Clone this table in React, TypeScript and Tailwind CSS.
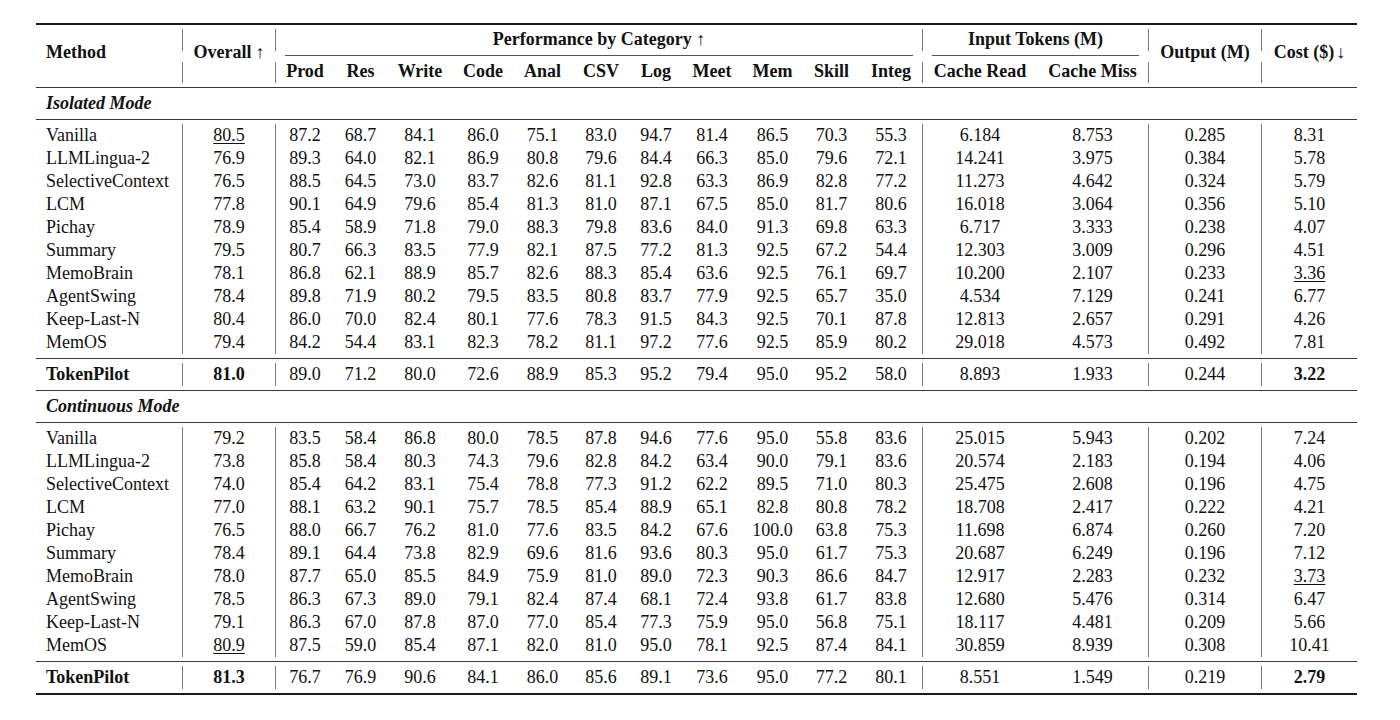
import React from "react";

type Cell = { v: string; u?: boolean; b?: boolean };
type RowData = { name: string; bold?: boolean; cells: (string | Cell)[] };

const GRID =
  "grid grid-cols-[146px_1px_92px_1px_58px_53px_66px_60px_59px_58px_52px_60px_61px_57px_62px_1px_114px_111px_1px_112px_1px_95px]";

const u = (v: string): Cell => ({ v, u: true });
const b = (v: string): Cell => ({ v, b: true });

const isolated: RowData[] = [
  { name: "Vanilla", cells: [u("80.5"), "87.2", "68.7", "84.1", "86.0", "75.1", "83.0", "94.7", "81.4", "86.5", "70.3", "55.3", "6.184", "8.753", "0.285", "8.31"] },
  { name: "LLMLingua-2", cells: ["76.9", "89.3", "64.0", "82.1", "86.9", "80.8", "79.6", "84.4", "66.3", "85.0", "79.6", "72.1", "14.241", "3.975", "0.384", "5.78"] },
  { name: "SelectiveContext", cells: ["76.5", "88.5", "64.5", "73.0", "83.7", "82.6", "81.1", "92.8", "63.3", "86.9", "82.8", "77.2", "11.273", "4.642", "0.324", "5.79"] },
  { name: "LCM", cells: ["77.8", "90.1", "64.9", "79.6", "85.4", "81.3", "81.0", "87.1", "67.5", "85.0", "81.7", "80.6", "16.018", "3.064", "0.356", "5.10"] },
  { name: "Pichay", cells: ["78.9", "85.4", "58.9", "71.8", "79.0", "88.3", "79.8", "83.6", "84.0", "91.3", "69.8", "63.3", "6.717", "3.333", "0.238", "4.07"] },
  { name: "Summary", cells: ["79.5", "80.7", "66.3", "83.5", "77.9", "82.1", "87.5", "77.2", "81.3", "92.5", "67.2", "54.4", "12.303", "3.009", "0.296", "4.51"] },
  { name: "MemoBrain", cells: ["78.1", "86.8", "62.1", "88.9", "85.7", "82.6", "88.3", "85.4", "63.6", "92.5", "76.1", "69.7", "10.200", "2.107", "0.233", u("3.36")] },
  { name: "AgentSwing", cells: ["78.4", "89.8", "71.9", "80.2", "79.5", "83.5", "80.8", "83.7", "77.9", "92.5", "65.7", "35.0", "4.534", "7.129", "0.241", "6.77"] },
  { name: "Keep-Last-N", cells: ["80.4", "86.0", "70.0", "82.4", "80.1", "77.6", "78.3", "91.5", "84.3", "92.5", "70.1", "87.8", "12.813", "2.657", "0.291", "4.26"] },
  { name: "MemOS", cells: ["79.4", "84.2", "54.4", "83.1", "82.3", "78.2", "81.1", "97.2", "77.6", "92.5", "85.9", "80.2", "29.018", "4.573", "0.492", "7.81"] },
];
const isolatedOurs: RowData = {
  name: "TokenPilot",
  bold: true,
  cells: [b("81.0"), "89.0", "71.2", "80.0", "72.6", "88.9", "85.3", "95.2", "79.4", "95.0", "95.2", "58.0", "8.893", "1.933", "0.244", b("3.22")],
};

const continuous: RowData[] = [
  { name: "Vanilla", cells: ["79.2", "83.5", "58.4", "86.8", "80.0", "78.5", "87.8", "94.6", "77.6", "95.0", "55.8", "83.6", "25.015", "5.943", "0.202", "7.24"] },
  { name: "LLMLingua-2", cells: ["73.8", "85.8", "58.4", "80.3", "74.3", "79.6", "82.8", "84.2", "63.4", "90.0", "79.1", "83.6", "20.574", "2.183", "0.194", "4.06"] },
  { name: "SelectiveContext", cells: ["74.0", "85.4", "64.2", "83.1", "75.4", "78.8", "77.3", "91.2", "62.2", "89.5", "71.0", "80.3", "25.475", "2.608", "0.196", "4.75"] },
  { name: "LCM", cells: ["77.0", "88.1", "63.2", "90.1", "75.7", "78.5", "85.4", "88.9", "65.1", "82.8", "80.8", "78.2", "18.708", "2.417", "0.222", "4.21"] },
  { name: "Pichay", cells: ["76.5", "88.0", "66.7", "76.2", "81.0", "77.6", "83.5", "84.2", "67.6", "100.0", "63.8", "75.3", "11.698", "6.874", "0.260", "7.20"] },
  { name: "Summary", cells: ["78.4", "89.1", "64.4", "73.8", "82.9", "69.6", "81.6", "93.6", "80.3", "95.0", "61.7", "75.3", "20.687", "6.249", "0.196", "7.12"] },
  { name: "MemoBrain", cells: ["78.0", "87.7", "65.0", "85.5", "84.9", "75.9", "81.0", "89.0", "72.3", "90.3", "86.6", "84.7", "12.917", "2.283", "0.232", u("3.73")] },
  { name: "AgentSwing", cells: ["78.5", "86.3", "67.3", "89.0", "79.1", "82.4", "87.4", "68.1", "72.4", "93.8", "61.7", "83.8", "12.680", "5.476", "0.314", "6.47"] },
  { name: "Keep-Last-N", cells: ["79.1", "86.3", "67.0", "87.8", "87.0", "77.0", "85.4", "77.3", "75.9", "95.0", "56.8", "75.1", "18.117", "4.481", "0.209", "5.66"] },
  { name: "MemOS", cells: [u("80.9"), "87.5", "59.0", "85.4", "87.1", "82.0", "81.0", "95.0", "78.1", "92.5", "87.4", "84.1", "30.859", "8.939", "0.308", "10.41"] },
];
const continuousOurs: RowData = {
  name: "TokenPilot",
  bold: true,
  cells: [b("81.3"), "76.7", "76.9", "90.6", "84.1", "86.0", "85.6", "89.1", "73.6", "95.0", "77.2", "80.1", "8.551", "1.549", "0.219", b("2.79")],
};

const VLine = () => <div className="bg-[#7a7a7a]" />;

function Num({ c }: { c: string | Cell }) {
  const cell: Cell = typeof c === "string" ? { v: c } : c;
  return (
    <div className={"text-center " + (cell.b ? "font-bold" : "")}>
      <span className={cell.u ? "underline underline-offset-[2px] decoration-1" : ""}>{cell.v}</span>
    </div>
  );
}

function Row({ r }: { r: RowData }) {
  const c = r.cells;
  return (
    <div className={GRID + " leading-[23px] h-[23px]"}>
      <div className={"pl-[10px] whitespace-nowrap " + (r.bold ? "font-bold" : "")}>{r.name}</div>
      <VLine />
      <Num c={c[0]} />
      <VLine />
      {c.slice(1, 12).map((x, i) => (
        <Num key={i} c={x} />
      ))}
      <VLine />
      <Num c={c[12]} />
      <Num c={c[13]} />
      <VLine />
      <Num c={c[14]} />
      <VLine />
      <Num c={c[15]} />
    </div>
  );
}

const MidRule = () => <div className="h-px bg-[#3a3a3a]" />;

function Section({ label, rows, ours }: { label: string; rows: RowData[]; ours: RowData }) {
  return (
    <>
      <div className="h-[31px] pt-[4px] pl-[10px] leading-[23px] font-bold italic">{label}</div>
      <MidRule />
      <div className="pt-[4px] pb-[4px]">
        {rows.map((r, i) => (
          <Row key={i} r={r} />
        ))}
      </div>
      <MidRule />
      <div className="pt-[4px] pb-[4px]">
        <Row r={ours} />
      </div>
    </>
  );
}

const subCats = ["Prod", "Res", "Write", "Code", "Anal", "CSV", "Log", "Meet", "Mem", "Skill", "Integ"];

function Header() {
  return (
    <div className={GRID + " grid-rows-[31px_31px] leading-[23px] font-bold"}>
      <div className="col-start-1 row-start-1 row-span-2 flex items-center pl-[10px] pb-[8px]">Method</div>
      <div className="col-start-2 row-start-1 bg-[#7a7a7a] mt-[4px] mb-[5px]" />
      <div className="col-start-2 row-start-2 bg-[#7a7a7a] mt-[6px] mb-[4px]" />
      <div className="col-start-3 row-start-1 row-span-2 flex items-center justify-center pb-[8px] whitespace-nowrap">
        Overall <span className="font-normal ml-[4px]">↑</span>
      </div>
      <div className="col-start-4 row-start-1 bg-[#7a7a7a] mt-[4px] mb-[5px]" />
      <div className="col-start-4 row-start-2 bg-[#7a7a7a] mt-[6px] mb-[4px]" />
      <div className="col-start-5 col-span-11 row-start-1 flex flex-col">
        <div className="pt-[3px] text-center whitespace-nowrap">
          Performance by Category <span className="font-normal">↑</span>
        </div>
        <div className="mt-auto mx-[9px] h-px bg-[#555]" />
      </div>
      {subCats.map((s, i) => (
        <div key={s} className="row-start-2 flex items-center justify-center" style={{ gridColumnStart: 5 + i }}>
          {s}
        </div>
      ))}
      <div className="col-start-16 row-start-1 bg-[#7a7a7a] mt-[4px] mb-[5px]" />
      <div className="col-start-16 row-start-2 bg-[#7a7a7a] mt-[6px] mb-[4px]" />
      <div className="col-start-17 col-span-2 row-start-1 flex flex-col">
        <div className="pt-[3px] text-center whitespace-nowrap">Input Tokens (M)</div>
        <div className="mt-auto mx-[9px] h-px bg-[#555]" />
      </div>
      <div className="col-start-17 row-start-2 flex items-center justify-center whitespace-nowrap">Cache Read</div>
      <div className="col-start-18 row-start-2 flex items-center justify-center whitespace-nowrap">Cache Miss</div>
      <div className="col-start-19 row-start-1 bg-[#7a7a7a] mt-[4px] mb-[5px]" />
      <div className="col-start-19 row-start-2 bg-[#7a7a7a] mt-[6px] mb-[4px]" />
      <div className="col-start-20 row-start-1 row-span-2 flex items-center justify-center pb-[8px] whitespace-nowrap">
        Output (M)
      </div>
      <div className="col-start-21 row-start-1 bg-[#7a7a7a] mt-[4px] mb-[5px]" />
      <div className="col-start-21 row-start-2 bg-[#7a7a7a] mt-[6px] mb-[4px]" />
      <div className="col-start-22 row-start-1 row-span-2 flex items-center justify-center pb-[8px] whitespace-nowrap">
        Cost ($) <span className="font-normal ml-[2px]">↓</span>
      </div>
    </div>
  );
}

export default function App() {
  return (
    <div className="w-[1400px] h-[720px] bg-white pt-[23px] pl-[36px] font-['Liberation_Serif',serif] text-[18px] text-[#111]">
      <div className="w-[1321px]">
        <div className="h-[2px] bg-[#1a1a1a]" />
        <Header />
        <MidRule />
        <Section label="Isolated Mode" rows={isolated} ours={isolatedOurs} />
        <MidRule />
        <Section label="Continuous Mode" rows={continuous} ours={continuousOurs} />
        <div className="h-[2px] bg-[#1a1a1a]" />
      </div>
    </div>
  );
}
